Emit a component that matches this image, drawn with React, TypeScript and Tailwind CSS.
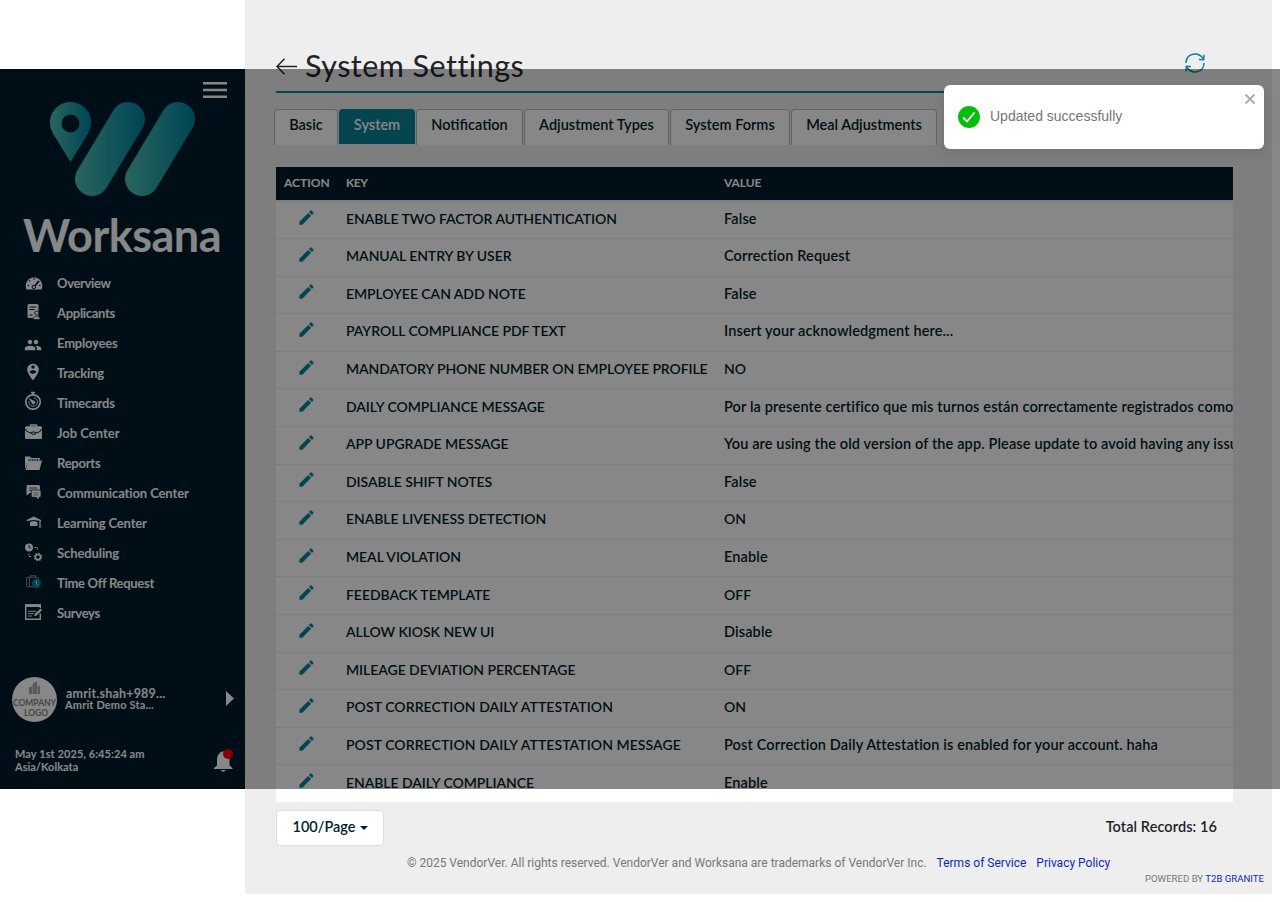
import React from 'react';
import { MdEdit, MdPeople, MdPersonPinCircle } from 'react-icons/md';

const font = "font-['Lato','Liberation_Sans',sans-serif]";

const svg = (children: React.ReactNode) => (
  <svg className="overflow-visible" width="18" height="18" viewBox="0 0 18 18" fill="none">{children}</svg>
);

const nav: { label: string; tracking: string; icon: React.ReactNode }[] = [
  {
    label: 'Overview', tracking: 'tracking-[-0.35px]',
    icon: svg(<><path d="M1.600 15.500A8.300 8.300 0 1 1 16.400 15.500Z" fill="#fff" /><g fill="#001c2b"><circle cx="3.300" cy="11.500" r=".8" /><circle cx="4.600" cy="7" r=".8" /><circle cx="9" cy="5" r=".8" /><circle cx="14.800" cy="11.500" r=".8" /></g><path d="M8.500 13.500 14 7" stroke="#001c2b" strokeWidth="1.800" /><circle cx="8.800" cy="13" r="1.700" fill="#fff" stroke="#001c2b" /></>),
  },
  {
    label: 'Applicants', tracking: 'tracking-[-0.3px]',
    icon: svg(<><rect x="2.500" y="0" width="11" height="14" rx="1.500" fill="#fff" /><path d="M4.500 3h7M4.500 5.500h5M4.500 11h3" stroke="#001c2b" strokeWidth="1" /><circle cx="11.800" cy="9" r="2.100" fill="#fff" stroke="#001c2b" strokeWidth=".8" /><path d="M8 15.500c0-4.500 7.200-4.500 7.200 0Z" fill="#fff" stroke="#001c2b" strokeWidth=".6" /></>),
  },
  { label: 'Employees', tracking: 'tracking-[-0.2px]', icon: <MdPeople size={18} className="-ml-px translate-y-[2px]" /> },
  { label: 'Tracking', tracking: 'tracking-[-0.2px]', icon: <MdPersonPinCircle size={20} className="-ml-[2px] -translate-y-px" /> },
  {
    label: 'Timecards', tracking: 'tracking-[-0.2px]',
    icon: svg(<><circle cx="8" cy="8" r="7.200" stroke="#fff" strokeWidth="1.700" /><path d="M6-1.500h4M8-1.500v2" stroke="#fff" strokeWidth="1.700" /><path d="M4 7a4.300 4.300 0 1 0 4.500-3.300" stroke="#fff" strokeWidth="1" /><path d="m3.500 4 6 3a1.800 1.800 0 1 1-2.500 2.500Z" fill="#fff" /></>),
  },
  {
    label: 'Job Center', tracking: 'tracking-[0]',
    icon: svg(<><path d="M5.500 3V1h6v2" stroke="#fff" strokeWidth="1.300" /><rect x="0" y="2.300" width="17" height="12.700" rx="1.500" fill="#fff" /><path d="M.500 5c.500 3 3 3.500 6 4m10-4c-.500 3-3 3.500-6 4" stroke="#001c2b" strokeWidth="1.100" /><ellipse cx="8.500" cy="9.200" rx="2.200" ry="1.200" fill="#fff" stroke="#001c2b" /></>),
  },
  {
    label: 'Reports', tracking: 'tracking-[-0.25px]',
    icon: svg(<><path d="M0 15V2.500h5l1.300 1.600H15V7H4Z" fill="#fff" /><path d="M3.500 6.500h13.500L14.500 16H.5Z" fill="#fff" /><path d="M3.500 6h11" stroke="#001c2b" strokeWidth="1.400" strokeDasharray="1 .7" /></>),
  },
  {
    label: 'Communication Center', tracking: 'tracking-[-0.1px]',
    icon: svg(<><path d="M2.500 1h11A1.500 1.500 0 0 1 15 2.500V9H5l-3.500 2.500v-9A1.500 1.500 0 0 1 2.500 1Z" fill="#fff" /><path d="M4 4h8M4 6.200h3" stroke="#001c2b" strokeWidth=".8" /><path d="M7 6h7.500A1.300 1.300 0 0 1 16 7.300V12a1.300 1.300 0 0 1-1.300 1.300H14V16l-3-2.700H7.500A1.300 1.300 0 0 1 6.200 12V7Z" fill="#fff" stroke="#001c2b" strokeWidth=".7" /><path d="M8.500 9h5M8.500 11h5" stroke="#001c2b" strokeWidth=".4" /></>),
  },
  {
    label: 'Learning Center', tracking: 'tracking-[-0.15px]',
    icon: svg(<><path d="M1.500 6 8.700 2.500 16 6v1L8.700 6 2 7Z" fill="#fff" /><path d="M5 8 8.700 7l3.800 1v4H5Z" fill="#fff" /><path d="M15 6.500V12M13.800 12.800h2.400" stroke="#fff" strokeWidth="1.200" /></>),
  },
  {
    label: 'Scheduling', tracking: 'tracking-[-0.1px]',
    icon: svg(<><circle cx="4" cy="3.500" r="4" fill="#fff" /><path d="M4 1v2.800h2" stroke="#001c2b" strokeWidth=".8" /><path d="M9.500 3.500h3v3M4 9.500v3h3" stroke="#fff" strokeDasharray="2 1" /><circle cx="13" cy="13" r="2.600" stroke="#fff" strokeWidth="1.500" /><circle cx="13" cy="13" r="3.700" stroke="#fff" strokeWidth="1.100" strokeDasharray="1.450 1.450" /></>),
  },
  {
    label: 'Time Off Request', tracking: 'tracking-[-0.3px]',
    icon: svg(<><rect x="1.600" y="3.300" width="12" height="9.500" rx="1.500" stroke="#99a" strokeWidth=".9" /><path d="M5.500 3V1.700h5V3M4.500 3.500v9" stroke="#99a" strokeWidth=".9" /><circle cx="11.500" cy="9.300" r="4.400" fill="#0b8aa5" /><path d="M11.500 6.500v3l1.500 1.500" stroke="#dff" strokeWidth=".9" /></>),
  },
  {
    label: 'Surveys', tracking: 'tracking-[-0.3px]',
    icon: svg(<><path d="M15.300 9.500v5.700H.700V1h14.600v3" stroke="#fff" strokeWidth="1.400" /><path d="M0 1.700h16" stroke="#fff" strokeWidth="2.600" /><path d="M3 7.300h8M3 9.600h6M3 12h4" stroke="#fff" strokeWidth=".9" /><path d="m9 12.300 1-2.500 5.500-5.300 1.600 1.600-5.500 5.300Z" fill="#fff" /></>),
  },
];

const rows: [string, string][] = [
  ['ENABLE TWO FACTOR AUTHENTICATION', 'False'],
  ['MANUAL ENTRY BY USER', 'Correction Request'],
  ['EMPLOYEE CAN ADD NOTE', 'False'],
  ['PAYROLL COMPLIANCE PDF TEXT', 'Insert your acknowledgment here...'],
  ['MANDATORY PHONE NUMBER ON EMPLOYEE PROFILE', 'NO'],
  ['DAILY COMPLIANCE MESSAGE', 'Por la presente certifico que mis turnos están correctamente registrados como'],
  ['APP UPGRADE MESSAGE', 'You are using the old version of the app. Please update to avoid having any issues'],
  ['DISABLE SHIFT NOTES', 'False'],
  ['ENABLE LIVENESS DETECTION', 'ON'],
  ['MEAL VIOLATION', 'Enable'],
  ['FEEDBACK TEMPLATE', 'OFF'],
  ['ALLOW KIOSK NEW UI', 'Disable'],
  ['MILEAGE DEVIATION PERCENTAGE', 'OFF'],
  ['POST CORRECTION DAILY ATTESTATION', 'ON'],
  ['POST CORRECTION DAILY ATTESTATION MESSAGE', 'Post Correction Daily Attestation is enabled for your account. haha'],
  ['ENABLE DAILY COMPLIANCE', 'Enable'],
];

const tabs = [
  { label: 'Basic', width: 'w-16' },
  { label: 'System', width: 'w-[76px]', active: true },
  { label: 'Notification', width: 'w-[107px]' },
  { label: 'Adjustment Types', width: 'w-[145px]' },
  { label: 'System Forms', width: 'w-[120px]' },
  { label: 'Meal Adjustments', width: 'w-[146px]' },
];

function Logo() {
  return (
    <svg className="ml-12 block" width="150" height="98" viewBox="48 100 150 98">
      <defs>
        <linearGradient id="pin" gradientUnits="userSpaceOnUse" x1="50" y1="0" x2="91" y2="0"><stop stopColor="#50bfb0" /><stop offset="1" stopColor="#0082a2" /></linearGradient>
        <linearGradient id="b1" gradientUnits="userSpaceOnUse" x1="75" y1="0" x2="145" y2="0"><stop stopColor="#50bfb0" /><stop offset="1" stopColor="#0082a2" /></linearGradient>
        <linearGradient id="b2" gradientUnits="userSpaceOnUse" x1="125" y1="0" x2="195" y2="0"><stop stopColor="#50bfb0" /><stop offset="1" stopColor="#0082a2" /></linearGradient>
      </defs>
      <path fill="url(#pin)" fillRule="evenodd" d="M70.500 162 53 133.500A20.600 20.600 0 1 1 88 133.500ZM70.500 114.500a9 9 0 1 0 0 18a9 9 0 1 0 0-18Z" />
      <path d="M128 119 92 179" stroke="url(#b1)" strokeWidth="34" strokeLinecap="round" />
      <path d="M178 119 142 179" stroke="url(#b2)" strokeWidth="34" strokeLinecap="round" />
    </svg>
  );
}

function Sidebar() {
  return (
    <aside className="mt-[69px] flex h-[720px] w-[245px] shrink-0 flex-col bg-[#001e2c] text-white">
      <div className="flex h-[31px] items-start justify-end pr-[18px] pt-[13px]">
        <svg width="24" height="17" viewBox="0 0 24 17"><path d="M0 1.250h24M0 8h24M0 14.750h24" stroke="#fff" strokeWidth="2.500" /></svg>
      </div>
      <Logo />
      <div className="ml-[23px] flex h-[70px] items-center whitespace-nowrap pt-[5px] text-[45px] font-bold leading-none tracking-[-0.5px]">Worksana</div>
      <nav className="flex flex-col">
        {nav.map((n) => (
          <div key={n.label} className="flex h-[30px] items-center pl-[25px]">
            <span className="flex w-8 items-center">{n.icon}</span>
            <span className={`${n.tracking} text-[13px] font-bold leading-4`}>{n.label}</span>
          </div>
        ))}
      </nav>
      <div className="mt-[49px] flex h-[45px] items-center pl-3">
        <div className="flex size-[45px] shrink-0 flex-col items-center overflow-hidden rounded-full bg-white pt-1 text-[#888]">
          <svg width="12" height="14" viewBox="0 0 12 14" fill="#aaa"><path d="M0 6h3v7H0ZM3.500 3 8 0v13H3.500ZM8.500 5H11v8H8.500Z" /></svg>
          <span className="pt-[3px] text-[8.500px] font-bold leading-[10px]">COMPANY</span>
          <span className="pl-[3px] text-[8.500px] font-bold leading-[10px]">LOGO</span>
        </div>
        <div className="flex w-[169px] flex-col whitespace-nowrap pl-2 font-bold">
          <span className="pl-px text-[12.500px] leading-3 tracking-[0.2px]">amrit.shah+989...</span>
          <span className="-mt-px text-[11px] leading-3 tracking-[0.15px]">Amrit Demo Sta...</span>
        </div>
        <svg className="-translate-y-px" width="8" height="15" viewBox="0 0 8 15"><path d="M0 0v15l8-7.500Z" fill="#fff" /></svg>
      </div>
      <div className="flex items-center justify-between pl-[15px] pr-[11px] pt-[25px]">
        <div className="flex flex-col text-[11px] font-bold leading-[13px]"><span className="tracking-[0.08px]">May 1st 2025, 6:45:24 am</span><span>Asia/Kolkata</span></div>
        <svg className="overflow-visible" width="20" height="26" viewBox="0 0 20 26"><path d="M0 22v-1l3-2.500v-6C3 8.500 5.500 5.500 8 4.500h3c3 1 4.500 4 4.500 8v6L18.500 21v1ZM7 23h4.500c0 2.300-4.500 2.300-4.500 0Z" fill="#fff" /><circle cx="14" cy="7" r="5" fill="#f00" /></svg>
      </div>
    </aside>
  );
}

export default function App() {
  return (
    <div className={`relative h-[902px] w-[1280px] overflow-hidden bg-white ${font}`}>
      <div className="flex">
        <Sidebar />
        <main className="flex h-[894px] w-[1027px] flex-col bg-[#eee] pl-[31px] pr-[39px] text-[#001e2c]">
          <header className="flex h-[93px] items-end justify-between border-b-2 border-[#0b8298] pb-[9px] text-[#212529]">
            <div className="flex items-center">
              <svg className="translate-y-px" width="21" height="17" viewBox="0 0 21 17" fill="none"><path d="M21 8.500H1M8.500.700 1 8.500l7.500 7.800" stroke="#212529" strokeWidth="1.500" /></svg>
              <h1 className="pl-2 text-[30.500px] leading-[34px] tracking-[0.480px]">System Settings</h1>
            </div>
            <svg className="mb-[9px] mr-7" width="20" height="20" viewBox="0 0 20 20" fill="none" stroke="#0b8298" strokeWidth="1.500"><path d="M1 10V9C2 .500 13-2 18.500 6M19 10v1C18 19.500 7 22 1.500 14M14 6.500l4.700.300.300-5M6 13.500l-4.700-.300-.300 5" /></svg>
          </header>
          <div className="-ml-[2px] mt-4 flex h-9 gap-px">
            {tabs.map((t) => (
              <div key={t.label} className={`${t.width} ${t.active ? 'h-[35px] border-[#0b8298] bg-[#0b8298] pb-[3px] text-white' : 'h-9 border-[#b4bfc3] bg-white pb-1'} flex shrink-0 items-center justify-center rounded-t border border-b-0 text-[14.500px] font-semibold leading-none whitespace-nowrap`}>{t.label}</div>
            ))}
          </div>
          <section className="mt-[22px] w-[957px] bg-white">
            <div className="grid h-[33.400px] grid-cols-[70px_378px_1fr] items-center bg-[#001e2c] pb-[2px] text-[12px] font-bold text-white">
              <span className="pl-2">ACTION</span><span className="tracking-[-0.4px]">KEY</span><span className="tracking-[-0.1px]">VALUE</span>
            </div>
            {rows.map(([k, v], i) => (
              <div key={k} className={`${i === 0 ? 'border-t-2' : 'border-t'} grid h-[37.600px] grid-cols-[70px_378px_509px] items-center border-[#eaeaea] pb-[2px] text-sm font-semibold`}>
                <MdEdit size={19} color="#0b8298" className="-mt-1 ml-[21px]" />
                <span className={`${k.startsWith('MANDATORY') ? 'tracking-[-0.1px]' : k.startsWith('POST') ? 'tracking-[0.07px]' : 'tracking-[-0.05px]'} whitespace-nowrap`}>{k}</span>
                <span className={`${v.length < 4 ? 'text-sm' : 'text-[14.500px] tracking-[0.13px]'} overflow-hidden whitespace-nowrap leading-5`}>{v}</span>
              </div>
            ))}
          </section>
          <div className="mt-2 flex h-9 items-center justify-between pr-4 text-[14.500px] font-semibold">
            <button className="flex h-9 w-[108px] items-center justify-center gap-1 rounded border border-[#dadde0] bg-white pb-[2px]">100/Page<svg className="translate-y-px" width="8" height="4" viewBox="0 0 8 4"><path d="M0 0h8L4 4Z" fill="#001e2c" /></svg></button>
            <span className="pb-[2px] tracking-[0.080px] text-[#212529]">Total Records: 16</span>
          </div>
          <footer className="font-['Roboto',sans-serif] text-[#777]">
            <div className="ml-[131px] mt-[9px] flex gap-[10px] whitespace-nowrap text-[12px] leading-4">
              <span>© 2025 VendorVer. All rights reserved. VendorVer and Worksana are trademarks of VendorVer Inc.</span>
              <a className="text-[#0b2bb5]">Terms of Service</a><a className="text-[#0b2bb5]">Privacy Policy</a>
            </div>
            <div className="-mr-[31px] mt-[2px] text-right text-[9.600px] leading-3">POWERED BY <a className="text-[#0b2bb5]">T2B GRANITE</a></div>
          </footer>
        </main>
      </div>
      <div className="absolute left-0 top-[69px] h-[720px] w-full bg-black/[0.47]" />
      <div className="absolute left-[944px] top-[85px] flex h-16 w-80 items-center rounded-md bg-white pl-[14px] font-['Liberation_Sans',sans-serif] text-sm text-[#757575] shadow-[0_4px_12px_rgba(0,0,0,0.1)]">
        <svg width="22" height="22" viewBox="0 0 22 22" fill="none"><circle cx="11" cy="11" r="11" fill="#07bc0c" /><path d="m5 11.500 4 4 7.500-9" stroke="#fff" strokeWidth="1.800" /></svg>
        <span className="pb-[2px] pl-[10px]">Updated successfully</span>
        <svg className="absolute right-2 top-2" width="12" height="12" viewBox="0 0 12 12"><path d="m1.500 1.500 9 9m0-9-9 9" stroke="#aaa" strokeWidth="1.800" /></svg>
      </div>
    </div>
  );
}
